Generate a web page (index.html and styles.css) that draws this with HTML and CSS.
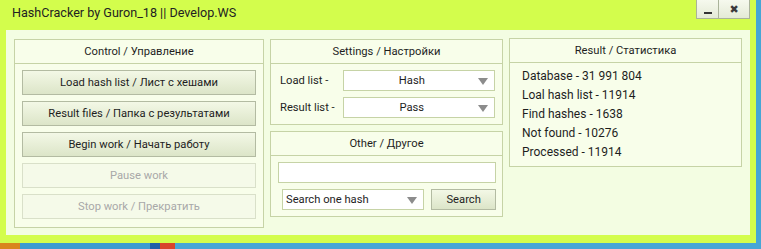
FILE: index.html
```html
<!DOCTYPE html>
<head>
    <title>HashCracker</title>
    <link rel="stylesheet" href="styles.css">
</head>
<body>
    <div class="window">
        <div class="titlebar">
            <span class="title">HashCracker by Guron_18 || Develop.WS</span>
            <div class="winbtns">
                <div class="winbtn min"><span></span></div>
                <div class="winbtn close">&#10006;</div>
            </div>
        </div>
        <div class="client">
            <div class="panel control">
                <div class="head">Control / Управление</div>
                <div class="body buttons">
                    <button>Load hash list / Лист с хешами</button>
                    <button>Result files / Папка с результатами</button>
                    <button>Begin work / Начать работу</button>
                    <button disabled>Pause work</button>
                    <button disabled>Stop work / Прекратить</button>
                </div>
            </div>
            <div class="column">
                <div class="panel settings">
                    <div class="head">Settings / Настройки</div>
                    <div class="body rows">
                        <div class="row"><label>Load list -</label><div class="select center">Hash<i></i></div></div>
                        <div class="row"><label>Result list -</label><div class="select center">Pass<i></i></div></div>
                    </div>
                </div>
                <div class="panel other">
                    <div class="head">Other / Другое</div>
                    <div class="body">
                        <input class="field" type="text">
                        <div class="search">
                            <div class="select mode">Search one hash<i></i></div>
                            <button class="small">Search</button>
                        </div>
                    </div>
                </div>
            </div>
            <div class="panel result">
                <div class="head">Result / Статистика</div>
                <div class="body stats">
                    <div>Database - 31 991 804</div>
                    <div>Loal hash list - 11914</div>
                    <div>Find hashes - 1638</div>
                    <div>Not found - 10276</div>
                    <div>Processed - 11914</div>
                </div>
            </div>
        </div>
    </div>
</body>
</html>
```
FILE: styles.css
```css
body {
    margin: 0;
    height: 249px;
    overflow: hidden;
    background: linear-gradient(90deg, #d9861c 0 20px, #3b9bd0 20px 150px, #1f5fa8 150px 160px, #d8442c 160px 175px, #46a6d6 175px);
    font-family: Roboto, "Open Sans", sans-serif;
    font-size: 11.2px;
    color: #1e1e1e;
}
.window {
    width: 756px;
    height: 243px;
    background-color: #d3fd4c;
    display: flex;
    flex-direction: column;
}
.titlebar {
    height: 30px;
    display: flex;
    align-items: flex-start;
}
.title {
    margin: 5px 0 0 12px;
    font-size: 12.6px;
    color: #222;
}
.winbtns {
    margin-left: auto;
    margin-right: 6px;
    display: flex;
}
.winbtn {
    height: 18px;
    background: linear-gradient(#f6f9ee, #e4ead6);
    border: 1px solid #aab39a;
    border-top: none;
    display: flex;
    align-items: center;
    justify-content: center;
    color: #3a3a3a;
    font-family: "DejaVu Sans", sans-serif;
    font-size: 11px;
    font-weight: bold;
}
.min {
    width: 21px;
    border-right: none;
}
.min span {
    width: 8px;
    height: 2px;
    background-color: #333;
    margin-top: 8px;
}
.close {
    width: 30px;
}
.client {
    margin: 0 6px 0 6px;
    height: 205px;
    background-color: #f3fde2;
    display: flex;
    gap: 6px;
    padding: 9px 8px 0 8px;
    box-sizing: border-box;
}
.panel {
    border: 1px solid #c6d3a6;
    background-color: #f8feea;
    box-sizing: border-box;
}
.head {
    height: 24px;
    line-height: 23px;
    border-bottom: 1px solid #c6d3a6;
    box-sizing: border-box;
    text-align: center;
}
.control {
    width: 250px;
    height: 189px;
}
.buttons {
    display: flex;
    flex-direction: column;
    gap: 6px;
    padding: 6px 7px 0 7px;
}
button {
    height: 25px;
    font-family: inherit;
    font-size: inherit;
    color: #1e1e1e;
    background: linear-gradient(#f3f8e6, #dce5c8);
    border: 1px solid #b3bba2;
    padding: 0;
}
button:disabled {
    background: #f5fae9;
    border-color: #d9e0c9;
    color: #a8a8a8;
}
.column {
    width: 233px;
    display: flex;
    flex-direction: column;
    gap: 6px;
}
.settings, .other {
    height: 86px;
}
.rows {
    display: flex;
    flex-direction: column;
    gap: 6px;
    padding: 6px 7px 0 9px;
}
.row {
    display: flex;
    align-items: center;
}
.row label {
    width: 63px;
}
.select {
    position: relative;
    height: 21px;
    line-height: 19px;
    background-color: #fff;
    border: 1px solid #c6d3a6;
    box-sizing: border-box;
}
.select i {
    position: absolute;
    right: 6px;
    top: 7px;
    border-left: 5px solid transparent;
    border-right: 5px solid transparent;
    border-top: 7px solid #8c8c8c;
}
.center {
    width: 153px;
    text-align: center;
    padding-right: 14px;
}
.other .body {
    padding: 6px 6px 0 7px;
}
.field {
    display: block;
    width: 218px;
    height: 21px;
    margin: 0;
    border: 1px solid #c6d3a6;
    background-color: #fff;
    box-sizing: border-box;
}
.search {
    display: flex;
    gap: 7px;
    margin-top: 6px;
    padding-left: 4px;
}
.mode {
    width: 143px;
    padding-left: 3px;
}
.small {
    width: 65px;
    height: 21px;
}
.result {
    width: 233px;
    height: 129px;
    margin-top: -1px;
}
.stats {
    padding: 4px 0 0 12px;
    font-size: 12px;
    line-height: 19px;
}
```
